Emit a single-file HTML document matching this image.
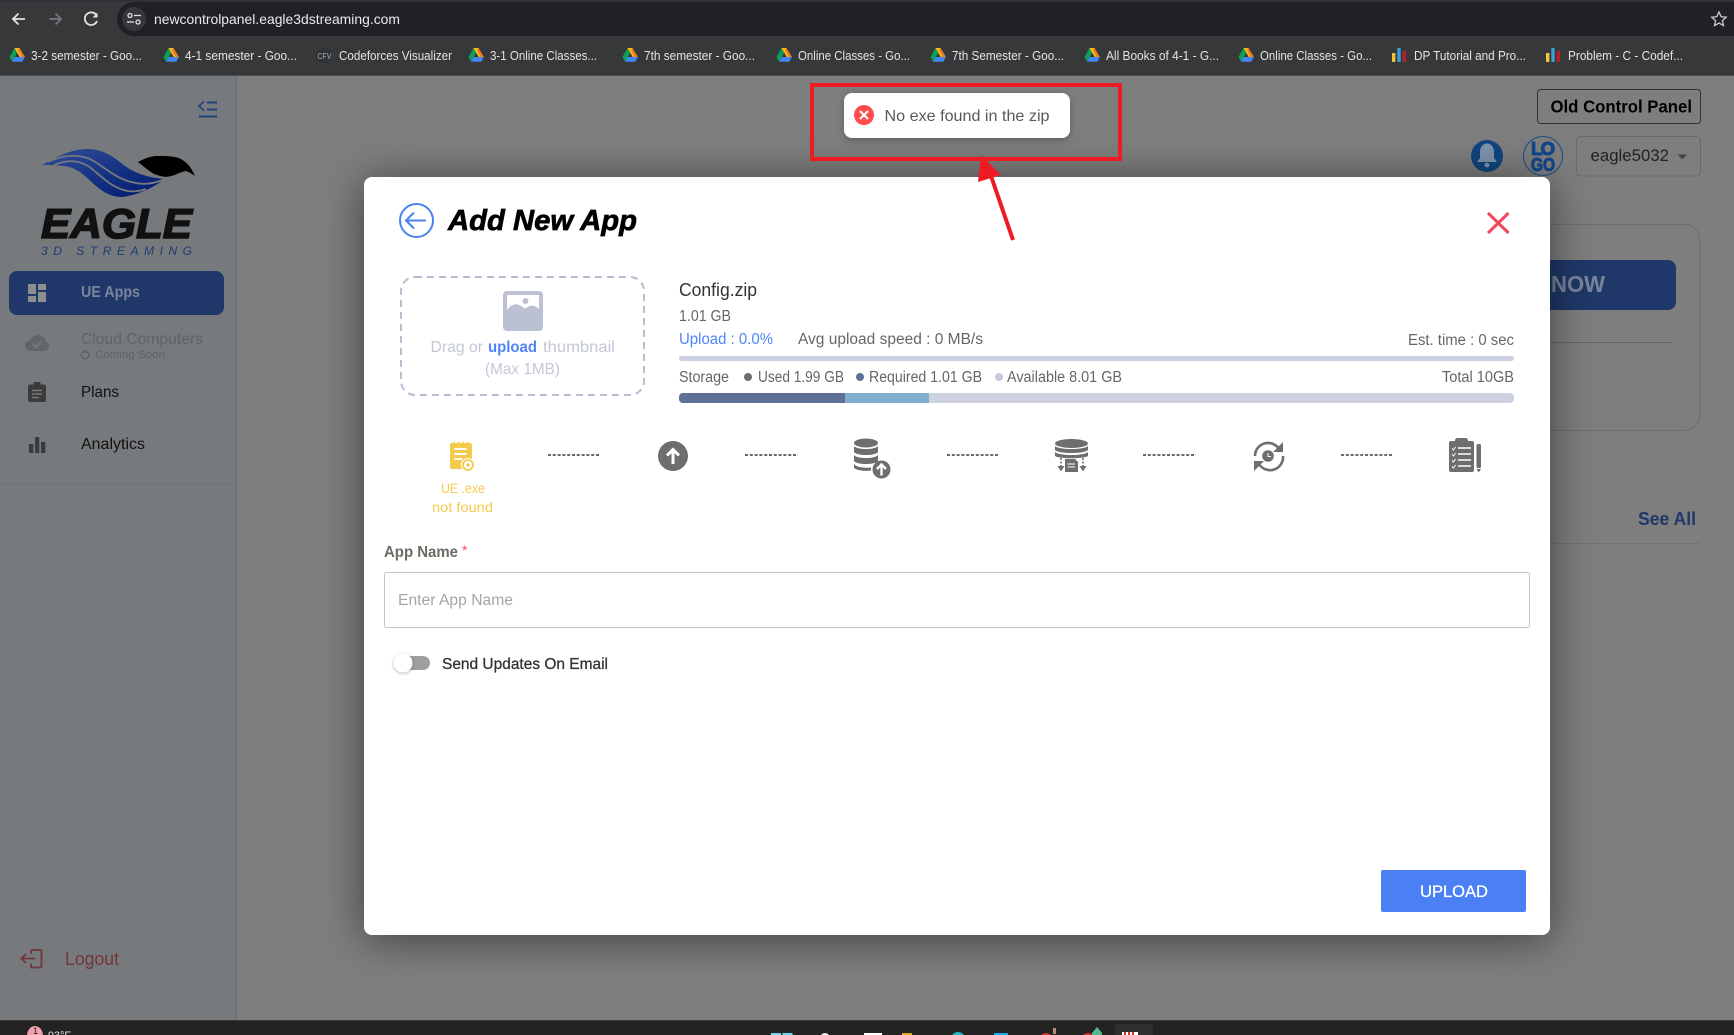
<!DOCTYPE html>
<html>
<head>
<meta charset="utf-8">
<title>Add New App</title>
<style>
html,body{margin:0;padding:0;background:#7e7e7e;overflow:hidden}
svg{display:block}
text{font-family:"Liberation Sans",sans-serif}
.bm{font-size:12.5px;fill:#e3e4e6}
.m{font-size:15.5px;fill:#666}
</style>
</head>
<body>
<svg xmlns="http://www.w3.org/2000/svg" width="1734" height="1035" viewBox="0 0 1734 1035">
<defs>
<filter id="sh" x="-15%" y="-20%" width="130%" height="140%"><feDropShadow dx="0" dy="4" stdDeviation="22" flood-color="#000" flood-opacity=".5"/></filter>
<filter id="ts" x="-15%" y="-30%" width="130%" height="170%"><feDropShadow dx="0" dy="2" stdDeviation="4" flood-color="#000" flood-opacity=".25"/></filter>
<filter id="kn" x="-50%" y="-50%" width="200%" height="200%"><feDropShadow dx="0" dy="1" stdDeviation="1.5" flood-color="#000" flood-opacity=".3"/></filter>
<linearGradient id="wing" x1="0" y1="0" x2="1" y2="1"><stop offset="0" stop-color="#2f4e99"/><stop offset="1" stop-color="#00186e"/></linearGradient>
<g id="drive">
<path d="M5 0 L0 9 L2.6 13.8 L7.8 4.6Z" fill="#0f9d58"/>
<path d="M5 0 H10 L15.4 9 H10.2Z" fill="#f9bc15"/>
<path d="M2.6 13.8 L5.2 9 H15.4 L12.8 13.8Z" fill="#4285f4"/>
<path d="M10 0 L15.4 9 H12.4 L8.6 2.4Z" fill="#ea4335" opacity=".55"/>
</g>
<g id="cf">
<rect x="0" y="5" width="3.4" height="9" rx=".6" fill="#f5c33b"/>
<rect x="5.3" y="0" width="3.4" height="14" rx=".6" fill="#3b9dd8"/>
<rect x="10.6" y="3" width="3.4" height="11" rx=".6" fill="#b5202a"/>
</g>
</defs>

<!-- page backgrounds -->
<rect x="0" y="0" width="1734" height="1035" fill="#7e7e7e"/>
<rect x="0" y="76" width="236" height="944" fill="#777a7c"/>
<rect x="236" y="76" width="1" height="944" fill="#6d7073"/>
<rect x="0" y="483" width="236" height="1" fill="#6c7073"/>

<!-- browser chrome -->
<rect x="0" y="0" width="1734" height="76" fill="#37383a"/>
<rect x="0" y="0" width="1734" height="2" fill="#2f3033"/>
<rect x="0" y="75" width="1734" height="1" fill="#4a4b4d"/>
<rect x="117" y="2" width="1640" height="34" rx="17" fill="#202124"/>
<path d="M25 19H13.5M18.5 13.5L13 19L18.5 24.5" fill="none" stroke="#e3e4e6" stroke-width="1.8"/>
<path d="M61 19H49.5M55.5 13.5L61 19L55.5 24.5" fill="none" stroke="#75777a" stroke-width="1.8"/>
<path d="M96.6 15.5A6.3 6.3 0 1 0 97 21" fill="none" stroke="#e3e4e6" stroke-width="1.8"/>
<path d="M97.5 12.5V17.5H92.5Z" fill="#e3e4e6"/>
<circle cx="134" cy="19" r="12" fill="#36373a"/>
<circle cx="130" cy="15.5" r="2" fill="none" stroke="#e3e4e6" stroke-width="1.3"/>
<path d="M134 15.5H141M127 22H134" stroke="#e3e4e6" stroke-width="1.3"/>
<circle cx="138" cy="22" r="2" fill="none" stroke="#e3e4e6" stroke-width="1.3"/>
<text x="154" y="24" font-size="14" fill="#e8eaed" textLength="246" lengthAdjust="spacingAndGlyphs">newcontrolpanel.eagle3dstreaming.com</text>
<path d="M1719 12l2.1 4.7 5.1.5-3.8 3.4 1.1 5-4.5-2.6-4.5 2.6 1.1-5-3.8-3.4 5.1-.5z" fill="none" stroke="#c8c9cb" stroke-width="1.3"/>

<!-- bookmarks -->
<use href="#drive" x="9.500" y="48"/><text class="bm" x="31" y="60" textLength="111" lengthAdjust="spacingAndGlyphs">3-2 semester - Goo...</text>
<use href="#drive" x="163.500" y="48"/><text class="bm" x="185" y="60" textLength="112" lengthAdjust="spacingAndGlyphs">4-1 semester - Goo...</text>
<circle cx="324.500" cy="55.500" r="8" fill="#2f3336"/><text x="317.500" y="59" font-size="8.500" fill="#a9adb0" textLength="14" lengthAdjust="spacingAndGlyphs">CFV</text>
<text class="bm" x="339" y="60" textLength="113" lengthAdjust="spacingAndGlyphs">Codeforces Visualizer</text>
<use href="#drive" x="468.500" y="48"/><text class="bm" x="490" y="60" textLength="107" lengthAdjust="spacingAndGlyphs">3-1 Online Classes...</text>
<use href="#drive" x="622.500" y="48"/><text class="bm" x="644" y="60" textLength="111" lengthAdjust="spacingAndGlyphs">7th semester - Goo...</text>
<use href="#drive" x="776.500" y="48"/><text class="bm" x="798" y="60" textLength="112" lengthAdjust="spacingAndGlyphs">Online Classes - Go...</text>
<use href="#drive" x="930.500" y="48"/><text class="bm" x="952" y="60" textLength="112" lengthAdjust="spacingAndGlyphs">7th Semester - Goo...</text>
<use href="#drive" x="1084.500" y="48"/><text class="bm" x="1106" y="60" textLength="113" lengthAdjust="spacingAndGlyphs">All Books of 4-1 - G...</text>
<use href="#drive" x="1238.500" y="48"/><text class="bm" x="1260" y="60" textLength="112" lengthAdjust="spacingAndGlyphs">Online Classes - Go...</text>
<use href="#cf" x="1392" y="48"/><text class="bm" x="1414" y="60" textLength="112" lengthAdjust="spacingAndGlyphs">DP Tutorial and Pro...</text>
<use href="#cf" x="1546" y="48"/><text class="bm" x="1568" y="60" textLength="115" lengthAdjust="spacingAndGlyphs">Problem - C - Codef...</text>

<!-- sidebar -->
<path d="M204 101.500L199 106L204 110.500" fill="none" stroke="#233f7c" stroke-width="1.800"/>
<path d="M207 102.500H217M207 109.500H217M199 116.500H217" stroke="#233f7c" stroke-width="2"/>

<!-- logo -->
<path d="M42 165C58 156 72 149 87 149C103 149 114 157 125 166C136 174 150 178 165 179C155 186 140 195 122 197C106 197 96 186 85 176C78 170 72 167 64 166C56 165 49 165 42 165Z" fill="url(#wing)"/>
<path d="M48 162C62 155 78 154 90 159C104 166 116 180 136 183C146 185 156 183 165 179" fill="none" stroke="#777a7c" stroke-width="1.800"/>
<path d="M54 165C66 160 78 160 88 166C100 174 110 188 128 191C134 192 140 191 146 189" fill="none" stroke="#777a7c" stroke-width="1.800"/>
<path d="M138 162C144 159 150 156 157 156C166 156 175 156 181 159C188 163 192 169 195 176C192 174 189 172 186 171C180 172 176 175 171 176C165 178 160 176 154 174C149 171 143 166 138 162Z" fill="#000"/>
<text x="41" y="238" font-size="42" font-weight="700" font-style="italic" fill="#111" stroke="#111" stroke-width="1.600" textLength="151" lengthAdjust="spacingAndGlyphs">EAGLE</text>
<text x="41" y="255" font-size="12" font-style="italic" fill="#1f3a72" textLength="151" lengthAdjust="spacing">3D STREAMING</text>

<!-- nav -->
<rect x="9" y="271" width="215" height="44" rx="8" fill="#1f3869"/>
<g fill="#8c8e90">
<rect x="28" y="284" width="8" height="10"/><rect x="38" y="284" width="8" height="6"/><rect x="28" y="296" width="8" height="6"/><rect x="38" y="292" width="8" height="10"/>
</g>
<text x="81" y="297" font-size="16" font-weight="700" fill="#79859a" textLength="59" lengthAdjust="spacingAndGlyphs">UE Apps</text>

<path d="M31 351C27 351 25 348.500 25 345.500C25 342.500 27.500 340.500 30 340.500C32 337 35 335 38 335C42 335 45 338 45.500 341.500C48 342 49 344 49 346C49 349 47 351 44 351Z" fill="#62666a"/>
<path d="M32.500 343.500L36 347L42 340.500" fill="none" stroke="#777a7c" stroke-width="1.800"/>
<text x="81" y="344" font-size="15.500" fill="#5f6367" textLength="122" lengthAdjust="spacingAndGlyphs">Cloud Computers</text>
<circle cx="85" cy="355" r="3.800" fill="none" stroke="#5f6367" stroke-width="1.400"/>
<path d="M85 349L88 353H82Z" fill="#5f6367"/>
<text x="95" y="358" font-size="11" fill="#5f6367" textLength="70" lengthAdjust="spacingAndGlyphs">Coming Soon</text>

<rect x="28" y="384.500" width="18" height="17.500" rx="2" fill="#3a3b3d"/>
<rect x="33.500" y="382" width="7" height="5" rx="1.500" fill="#3a3b3d"/>
<path d="M32 390.500H42M32 394H42M32 397.500H39" stroke="#777a7c" stroke-width="1.500"/>
<text x="81" y="397" font-size="16" fill="#111" textLength="38" lengthAdjust="spacingAndGlyphs">Plans</text>

<g fill="#3a3b3d"><rect x="29" y="444" width="4.300" height="9"/><rect x="35" y="437" width="4.300" height="16"/><rect x="41" y="442" width="4.300" height="11"/></g>
<text x="81" y="449" font-size="16" fill="#111" textLength="64" lengthAdjust="spacingAndGlyphs">Analytics</text>

<path d="M31 950H40.500A1 1 0 0 1 41.500 951V966.500A1 1 0 0 1 40.500 967.500H31V963.500M31 954V950M21.500 958.500H35M26 954L21.500 958.500L26 963" fill="none" stroke="#73343a" stroke-width="1.800"/>
<text x="65" y="965" font-size="18" fill="#73343a" textLength="54" lengthAdjust="spacingAndGlyphs">Logout</text>

<!-- taskbar -->
<rect x="0" y="1020" width="1734" height="15" fill="#232323"/>
<rect x="0" y="1020" width="1734" height="1" fill="#3c3c3c"/>
<ellipse cx="35" cy="1036" rx="8" ry="10" fill="#f0a0ae"/>
<text x="33" y="1034" font-size="9" fill="#222">1</text>
<text x="48" y="1039" font-size="11" fill="#e6e6e6" textLength="23" lengthAdjust="spacingAndGlyphs">93°F</text>
<rect x="771" y="1033" width="10" height="2" fill="#72d3f3"/><rect x="782.500" y="1033" width="10" height="2" fill="#72d3f3"/>
<circle cx="825" cy="1038" r="5" fill="#eee"/>
<rect x="864" y="1033" width="18" height="2" fill="#fff"/>
<rect x="902" y="1033" width="10" height="2" fill="#e0a81c"/>
<circle cx="958" cy="1039" r="7" fill="#27b7c4"/>
<rect x="994" y="1033" width="14" height="2" fill="#1ea7f0"/>
<circle cx="1046" cy="1040" r="7" fill="#d83028"/>
<rect x="1053" y="1028" width="3" height="6" fill="#b78f7f"/>
<circle cx="1088" cy="1040" r="7" fill="#d83028"/>
<path d="M1092 1033L1097 1027L1102 1033V1035H1092Z" fill="#59b98d"/>
<path d="M1115 1035V1026a2 2 0 0 1 2-2H1151a2 2 0 0 1 2 2V1035Z" fill="#303030"/>
<rect x="1122" y="1032" width="16" height="3" fill="#fff"/>
<rect x="1124" y="1032" width="2" height="3" fill="#d9342b"/><rect x="1128" y="1032" width="2" height="3" fill="#d9342b"/><rect x="1132" y="1032" width="2" height="3" fill="#d9342b"/>

<!-- main content behind modal -->
<rect x="1537.500" y="89.500" width="163" height="34" rx="3" fill="none" stroke="#333" stroke-width="1"/>
<text x="1550.500" y="112.500" font-size="17.500" font-weight="700" fill="#000" textLength="141.500" lengthAdjust="spacingAndGlyphs">Old Control Panel</text>
<circle cx="1487" cy="156" r="16" fill="#10457f"/>
<path d="M1487 143.500C1482.500 143.500 1480 147.500 1480 152V158L1477 162H1497L1494 158V152C1494 147.500 1491.500 143.500 1487 143.500Z" fill="#7d94ad"/>
<circle cx="1487" cy="165" r="2.400" fill="#7d94ad"/>
<circle cx="1543" cy="156" r="19.500" fill="none" stroke="#1a4a86" stroke-width="1"/>
<text x="1531" y="155" font-size="18.500" font-weight="700" fill="#11468a" stroke="#11468a" stroke-width="1" textLength="24" lengthAdjust="spacing">LO</text>
<text x="1531" y="171" font-size="18.500" font-weight="700" fill="#11468a" stroke="#11468a" stroke-width="1" textLength="24" lengthAdjust="spacingAndGlyphs">GO</text>
<rect x="1576.500" y="136.500" width="124" height="39.500" rx="4" fill="none" stroke="#6a6a6a"/>
<text x="1590.500" y="161" font-size="17" fill="#222" textLength="78.500" lengthAdjust="spacingAndGlyphs">eagle5032</text>
<path d="M1677.500 154.500H1687L1682.200 159.500Z" fill="#444"/>

<rect x="1400" y="224.500" width="300" height="206" rx="16" fill="none" stroke="#6d6d77"/>
<rect x="1400" y="260" width="276" height="50" rx="8" fill="#1f3869"/>
<text x="1551" y="292" font-size="23" font-weight="700" fill="#79859a" textLength="54" lengthAdjust="spacingAndGlyphs">NOW</text>
<rect x="1500" y="342" width="173" height="1" fill="#666"/>
<text x="1638" y="525" font-size="18" font-weight="700" fill="#1f3869" textLength="58" lengthAdjust="spacingAndGlyphs">See All</text>
<rect x="1500" y="543" width="200" height="1" fill="#727272"/>

<!-- modal -->
<rect x="364" y="177" width="1186" height="758" rx="8" fill="#fff" filter="url(#sh)"/>

<circle cx="416.500" cy="220.500" r="16.500" fill="none" stroke="#4b82f1" stroke-width="2"/>
<path d="M426 220.500H407M414 212.500L406 220.500L414 228.500" fill="none" stroke="#4b82f1" stroke-width="2"/>
<text x="448" y="230" font-size="29" font-weight="700" font-style="italic" fill="#000" stroke="#000" stroke-width=".7" textLength="189" lengthAdjust="spacingAndGlyphs">Add New App</text>
<path d="M1488 213L1508.500 233M1508.500 213L1488 233" stroke="#f5475c" stroke-width="3" fill="none"/>

<!-- dropzone -->
<rect x="401" y="277" width="243" height="118" rx="14" fill="none" stroke="#b9bdd2" stroke-width="2" stroke-dasharray="7 5"/>
<rect x="503" y="291" width="40" height="40" rx="4" fill="#bbc0d3"/>
<path d="M507 295H539V309C536 306 533 305 530 306C527 307 526 309 524 308C520 305 516 303 513 305C510 306 509 308 507 310Z" fill="#fff"/>
<circle cx="525.500" cy="301" r="3" fill="#bbc0d3"/>
<text x="430.500" y="352" font-size="16" fill="#c4c7d6" textLength="52.500" lengthAdjust="spacingAndGlyphs">Drag or</text>
<text x="488" y="352" font-size="16" font-weight="700" fill="#4f84f6" textLength="49" lengthAdjust="spacingAndGlyphs">upload</text>
<text x="543" y="352" font-size="16" fill="#c4c7d6" textLength="72" lengthAdjust="spacingAndGlyphs">thumbnail</text>
<text x="485" y="374" font-size="16" fill="#c4c7d6" textLength="75" lengthAdjust="spacingAndGlyphs">(Max 1MB)</text>

<!-- file info -->
<text x="679" y="296" font-size="18" fill="#333" textLength="78" lengthAdjust="spacingAndGlyphs">Config.zip</text>
<text x="679" y="321" font-size="15.500" fill="#666" textLength="52" lengthAdjust="spacingAndGlyphs">1.01 GB</text>
<text x="679" y="344" font-size="15.500" fill="#4f84f6" textLength="94" lengthAdjust="spacingAndGlyphs">Upload : 0.0%</text>
<text class="m" x="798" y="344" textLength="185" lengthAdjust="spacingAndGlyphs">Avg upload speed : 0 MB/s</text>
<text class="m" x="1408" y="345" textLength="106" lengthAdjust="spacingAndGlyphs">Est. time : 0 sec</text>
<rect x="679" y="356" width="835" height="5" rx="2.500" fill="#ccd0e0"/>

<text class="m" x="679" y="382" textLength="50" lengthAdjust="spacingAndGlyphs">Storage</text>
<circle cx="748" cy="377" r="4" fill="#6e6e6e"/>
<text class="m" x="758" y="382" textLength="86" lengthAdjust="spacingAndGlyphs">Used 1.99 GB</text>
<circle cx="860" cy="377" r="4" fill="#5e7099"/>
<text class="m" x="869" y="382" textLength="113" lengthAdjust="spacingAndGlyphs">Required 1.01 GB</text>
<circle cx="999" cy="377" r="4" fill="#c5cadb"/>
<text class="m" x="1007" y="382" textLength="115" lengthAdjust="spacingAndGlyphs">Available 8.01 GB</text>
<text class="m" x="1442" y="382" textLength="72" lengthAdjust="spacingAndGlyphs">Total 10GB</text>
<rect x="679" y="393" width="835" height="10" rx="4" fill="#cdd1e0"/>
<path d="M683 393H845V403H683a4 4 0 0 1-4-4V397a4 4 0 0 1 4-4Z" fill="#5f7097"/>
<rect x="845" y="393" width="84" height="10" fill="#80afd0"/>

<!-- steps -->
<path d="M452 443H470a2 2 0 0 1 2 2V469H452a2 2 0 0 1-2-2V445a2 2 0 0 1 2-2Z" fill="#f5cb4c"/>
<path d="M454 441.500V444M458.500 441.500V444M463 441.500V444M467.500 441.500V444" stroke="#f5cb4c" stroke-width="1.400"/>
<path d="M454.500 449H466.500M454.500 454H466.500M454.500 459H462" stroke="#fff" stroke-width="2"/>
<circle cx="468" cy="465" r="7" fill="#fff"/>
<circle cx="468" cy="465" r="5" fill="none" stroke="#f5cb4c" stroke-width="1.800"/>
<circle cx="468" cy="465" r="1.800" fill="#f5cb4c"/>
<text x="441" y="493" font-size="14" fill="#f5cb4c" textLength="44" lengthAdjust="spacingAndGlyphs">UE .exe</text>
<text x="432" y="512" font-size="14" fill="#f5cb4c" textLength="61" lengthAdjust="spacingAndGlyphs">not found</text>

<g stroke="#6a6a6a" stroke-width="2" stroke-dasharray="3 1.800" fill="none">
<path d="M548 455H600M745 455H798M947 455H999M1143 455H1196M1341 455H1393"/>
</g>

<circle cx="673" cy="456" r="15" fill="#6e6e6e"/>
<path d="M673 464V449.500M667 455.500L673 449.500L679 455.500" fill="none" stroke="#fff" stroke-width="3"/>

<!-- db upload -->
<g fill="#6e6e6e">
<ellipse cx="866" cy="443" rx="12" ry="4.500"/>
<path d="M854 446C857 450 875 450 878 446V452C875 456 857 456 854 452Z"/>
<path d="M854 455C857 459 875 459 878 455V461C875 465 857 465 854 461Z"/>
<path d="M854 464C857 468 868 468 871 467.500V470.500C866 471.500 857 470.500 854 468Z"/>
<circle cx="881.500" cy="469.500" r="9"/>
</g>
<path d="M881.500 475.500V464.500M877 469L881.500 464.500L886 469" fill="none" stroke="#fff" stroke-width="2.400"/>

<!-- db download -->
<g fill="#6e6e6e">
<ellipse cx="1071.500" cy="443.500" rx="16.500" ry="4.500"/>
<path d="M1055 446C1059 450 1084 450 1088 446V450C1084 454 1059 454 1055 450Z"/>
<path d="M1055 452C1059 456 1084 456 1088 452V456C1084 459 1059 459 1055 456Z"/>
<path d="M1065 459H1075L1078 462V472H1065Z"/>
<path d="M1057.500 466H1064.500L1061 471.500Z M1079.500 466H1086.500L1083 471.500Z"/>
</g>
<path d="M1061 458V466M1083 458V466" stroke="#6e6e6e" stroke-width="1.600" stroke-dasharray="2 1.500"/>
<path d="M1067.500 464H1075M1067.500 467H1075" stroke="#fff" stroke-width="1"/>

<!-- sync clock -->
<circle cx="1268" cy="456" r="5.800" fill="#6e6e6e"/>
<path d="M1268 453V456.500H1271" stroke="#fff" stroke-width="1" fill="none"/>
<path d="M1255 456A13 13 0 0 1 1279 449" fill="none" stroke="#6e6e6e" stroke-width="2.600"/>
<path d="M1283 456A13 13 0 0 1 1259 464" fill="none" stroke="#6e6e6e" stroke-width="2.600"/>
<path d="M1283 442V452H1273Z M1254 471V461H1264Z" fill="#6e6e6e"/>

<!-- clipboard -->
<rect x="1449" y="441" width="25" height="31" rx="2" fill="#6e6e6e"/>
<rect x="1455" y="438" width="13" height="6" rx="2.500" fill="#6e6e6e"/>
<path d="M1458 448H1471M1458 454H1471M1458 460H1471M1458 466H1471" stroke="#fff" stroke-width="1.500"/>
<path d="M1452 448.500L1453.500 450L1455.500 447M1452 454.500L1453.500 456L1455.500 453M1452 460.500L1453.500 462L1455.500 459M1452 466.500L1453.500 468L1455.500 465" stroke="#fff" stroke-width="1" fill="none"/>
<rect x="1476.500" y="444" width="4.500" height="24" rx="1.500" fill="#6e6e6e"/>
<path d="M1476.500 469H1481L1478.700 472.500Z" fill="#6e6e6e"/>

<!-- form -->
<text x="384" y="557" font-size="15.500" font-weight="700" fill="#6c6c64" textLength="74" lengthAdjust="spacingAndGlyphs">App Name</text>
<text x="462" y="555" font-size="14" fill="#f5475c">*</text>
<rect x="384.500" y="572.500" width="1145" height="55" rx="2.500" fill="#fff" stroke="#c4c4c4"/>
<text x="398" y="605" font-size="15.500" fill="#a5a5a5" textLength="115" lengthAdjust="spacingAndGlyphs">Enter App Name</text>
<rect x="400" y="656" width="30" height="14" rx="7" fill="#9e9e9e"/>
<circle cx="403" cy="663" r="9.500" fill="#fff" filter="url(#kn)"/>
<text x="442" y="669" font-size="15.500" fill="#333" stroke="#333" stroke-width=".3" textLength="166" lengthAdjust="spacingAndGlyphs">Send Updates On Email</text>

<rect x="1381" y="870" width="145" height="42" rx="2" fill="#4a80f4"/>
<text x="1420" y="897" font-size="17" fill="#fff" stroke="#fff" stroke-width=".3" textLength="68" lengthAdjust="spacingAndGlyphs">UPLOAD</text>

<!-- annotation + toast -->
<rect x="812" y="85" width="308" height="74" fill="none" stroke="#ed1c24" stroke-width="4"/>
<path d="M991 176L1013 240" stroke="#ed1c24" stroke-width="4" fill="none"/>
<path d="M981 155L1001 175L978 182Z" fill="#ed1c24"/>
<rect x="844" y="93" width="226" height="45" rx="8" fill="#fff" filter="url(#ts)"/>
<circle cx="864" cy="115" r="10" fill="#ff4d4f"/>
<path d="M860 111L868 119M868 111L860 119" stroke="#fff" stroke-width="2"/>
<text x="884.500" y="121" font-size="16" fill="#595959" textLength="165" lengthAdjust="spacingAndGlyphs">No exe found in the zip</text>
</svg>
</body>
</html>
